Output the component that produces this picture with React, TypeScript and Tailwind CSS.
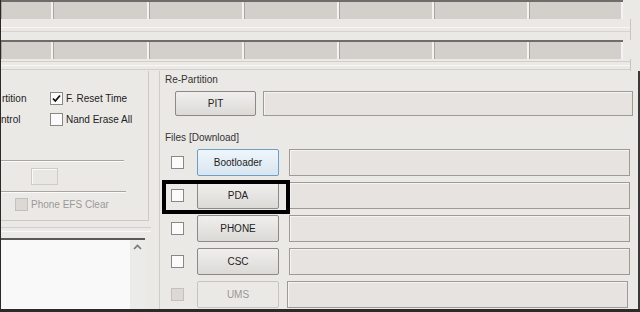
import React from "react";

const topCells = [52, 96, 95, 95, 95, 95, 94];

function CellRow() {
  return (
    <div className="flex h-[19px] w-[622px] border-t-2 border-[#6f6d6b]">
      {topCells.map((w, i) => (
        <div
          key={i}
          style={{ width: w }}
          className="h-full bg-[#d3d0cc] border-r-2 border-r-[#f4f3f1] border-l border-l-[#a9a6a2]"
        />
      ))}
    </div>
  );
}

function Check({ checked, disabled }: { checked?: boolean; disabled?: boolean }) {
  return (
    <div
      className={`w-[13px] h-[13px] border flex items-center justify-center shrink-0 ${
        disabled ? "border-[#c4c1bd] bg-[#dcd9d5]" : "border-[#8a8784] bg-[#fbfbfb]"
      }`}
    >
      {checked && (
        <svg width="11" height="11" viewBox="0 0 11 11">
          <path d="M2 5.5 L4.3 8 L9 2.5" fill="none" stroke="#111" strokeWidth="1.8" />
        </svg>
      )}
    </div>
  );
}

function Btn({ label, w, h, hot, disabled }: { label: string; w: string; h: string; hot?: boolean; disabled?: boolean }) {
  return (
    <div
      className={`${w} ${h} shrink-0 flex items-center justify-center rounded-[2px] border ${
        hot
          ? "border-[#6d9fc4] bg-gradient-to-b from-[#eef6fc] to-[#d9e6ef] text-[#222]"
          : disabled
          ? "border-[#c8c5c1] bg-[#ebe9e6] text-[#9b9894]"
          : "border-[#8c8986] bg-gradient-to-b from-[#f0efed] to-[#dcdad7] text-[#222]"
      }`}
    >
      {label}
    </div>
  );
}

function Field({ w }: { w: string }) {
  return <div className={`${w} h-full border border-[#9e9a96] bg-[#e6e3e0] shadow-[inset_1px_1px_0_#f5f4f2]`} />;
}

export default function App() {
  const files = [
    { label: "Bootloader", hot: true },
    { label: "PDA" },
    { label: "PHONE" },
    { label: "CSC" },
    { label: "UMS", disabled: true },
  ];
  return (
    <div className="w-[640px] h-[312px] overflow-hidden relative bg-[#ebe9e6] text-[10px] text-[#222] font-['Liberation_Sans',Arial,sans-serif] border-l border-b-[3px] border-[#2a2a2a]">
      {/* top rows */}
      <CellRow />
      <div className="h-[21px] w-[630px] flex flex-col justify-center gap-[3px] border-r border-[#c9c6c2]">
        <div className="h-px bg-[#f8f7f6]" />
        <div className="h-px bg-[#d6d3cf]" />
      </div>
      <CellRow />
      <div className="h-[12px] w-[630px] flex flex-col gap-[3px] pt-[2px] border-r border-[#c9c6c2]">
        <div className="h-px bg-[#d2cfcb]" />
        <div className="h-px bg-[#f8f7f6]" />
        <div className="h-px bg-[#d2cfcb]" />
      </div>

      {/* main */}
      <div className="flex h-[240px]">
        {/* left column */}
        <div className="w-[158px] shrink-0 flex flex-col">
          <div className="h-[150px] w-[148px] border-r border-b border-[#cdcac6] flex flex-col pt-[21px]">
            <div className="flex items-center h-[13px]">
              <span className="w-[49px] pl-[1px] whitespace-nowrap">rtition</span>
              <Check checked />
              <span className="ml-[3px] whitespace-nowrap">F. Reset Time</span>
            </div>
            <div className="flex items-center h-[13px] mt-[8px]">
              <span className="w-[49px] whitespace-nowrap">ntrol</span>
              <Check />
              <span className="ml-[3px] whitespace-nowrap">Nand Erase All</span>
            </div>
            <div className="mt-[34px] w-[123px] h-[2px] border-t border-[#a8a5a1] border-b border-b-[#fafafa]" />
            <div className="mt-[6px] ml-[30px] w-[27px] h-[17px] border border-[#cfccc8] bg-[#e9e7e4] shadow-[inset_1px_1px_0_#fafafa]" />
            <div className="mt-[6px] w-[125px] h-[2px] border-t border-[#a8a5a1] border-b border-b-[#fafafa]" />
            <div className="flex items-center mt-[4px] ml-[14px] text-[#9c9995]">
              <Check disabled />
              <span className="ml-[3px] whitespace-nowrap">Phone EFS Clear</span>
            </div>
          </div>
          <div className="h-[17px] w-[150px] flex flex-col gap-[3px] pt-[6px]">
            <div className="h-px bg-[#d2cfcb]" />
            <div className="h-px bg-[#f8f7f6]" />
          </div>
          <div className="flex-1 w-[144px] border-t-2 border-[#5a5856] bg-[#f9f9f9] flex">
            <div className="flex-1" />
            <div className="w-[15px] bg-[#ebebea] flex justify-center pt-[4px]">
              <svg width="9" height="6" viewBox="0 0 9 6">
                <path d="M1 5 L4.5 1.5 L8 5" fill="none" stroke="#777" strokeWidth="1.6" />
              </svg>
            </div>
          </div>
        </div>

        {/* right column */}
        <div className="flex-1 flex flex-col border-l border-[#d0cdc9] pl-[5px] border-r-2 border-r-[#3a3a3a]">
          <div className="pt-[1px] text-[#333]">Re-Partition</div>
          <div className="flex items-center h-[25px] mt-[4px] ml-[10px]">
            <Btn label="PIT" w="w-[81px]" h="h-[25px]" />
            <div className="ml-[7px] h-full">
              <Field w="w-[370px]" />
            </div>
          </div>
          <div className="mt-[14px] text-[#333]">Files [Download]</div>
          <div className="flex flex-col gap-[6px] mt-[4px]">
            {files.map((f) => (
              <div key={f.label} className="flex items-center h-[27px]">
                <div className="ml-[6px]">
                  <Check disabled={f.disabled} />
                </div>
                <div className="ml-[13px]">
                  <Btn label={f.label} w="w-[82px]" h="h-[27px]" hot={f.hot} disabled={f.disabled} />
                </div>
                <div className={`${f.disabled ? "ml-[8px]" : "ml-[10px]"} h-full`}>
                  <Field w="w-[341px]" />
                </div>
              </div>
            ))}
          </div>
        </div>
      </div>

      {/* annotation highlight */}
      <div className="absolute left-[161px] top-[180px] w-[128px] h-[34px] border-4 border-black" />
    </div>
  );
}
